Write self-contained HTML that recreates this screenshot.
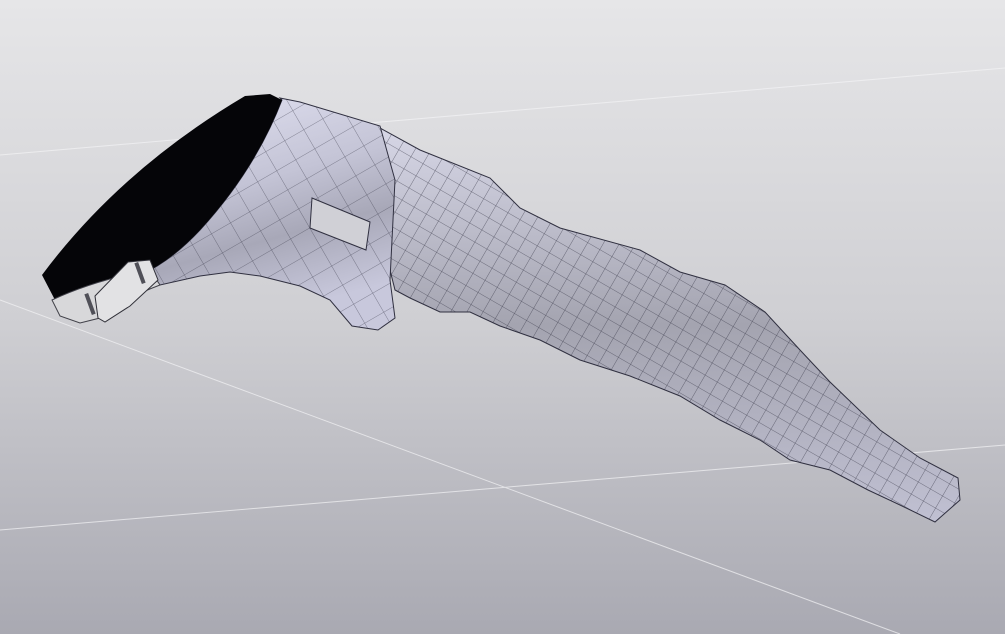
<!DOCTYPE html>
<html><head><meta charset="utf-8"><style>html,body{margin:0;padding:0;width:1005px;height:634px;overflow:hidden}</style></head>
<body>
<svg width="1005" height="634" viewBox="0 0 1005 634" xmlns="http://www.w3.org/2000/svg">
<defs>
<linearGradient id="bg" x1="0" y1="0" x2="0" y2="1">
<stop offset="0" stop-color="#e6e6e8"/><stop offset="0.5" stop-color="#cfcfd3"/><stop offset="1" stop-color="#a9a9b2"/>
</linearGradient>
<linearGradient id="arm" x1="0" y1="0" x2="0.3" y2="1">
<stop offset="0" stop-color="#e2e2f2"/><stop offset="0.45" stop-color="#c4c4d6"/><stop offset="0.7" stop-color="#a8a8b8"/><stop offset="1" stop-color="#c8c8dc"/>
</linearGradient>
<linearGradient id="fore" x1="0" y1="0" x2="0" y2="1">
<stop offset="0" stop-color="#d6d6e6"/><stop offset="0.5" stop-color="#a4a4b0"/><stop offset="1" stop-color="#c0c0d2"/>
</linearGradient>
<pattern id="mesh" width="14" height="14" patternUnits="userSpaceOnUse" patternTransform="rotate(30)">
<path d="M0 0H14M0 0V14" stroke="#2a2a3a" stroke-width="0.8" fill="none"/>
</pattern>
<pattern id="mesh2" width="22" height="22" patternUnits="userSpaceOnUse" patternTransform="rotate(-30)">
<path d="M0 0H22M0 0V22" stroke="#2a2a3a" stroke-width="0.8" fill="none"/>
</pattern>
<clipPath id="fc"><path d="M380 128 L420 150 L490 178 L520 208 L560 228 L640 250 L680 272 L725 285 L765 312 L800 350 L830 382 L880 430 L920 458 L958 478 L960 500 L935 522 L900 505 L868 490 L830 470 L790 460 L760 440 L720 420 L680 396 L630 376 L580 360 L540 340 L500 326 L470 312 L440 312 L410 298 L395 290 L390 270 Z"/></clipPath>
<clipPath id="cc"><path d="M280 98 L300 102 L380 126 L395 180 L390 280 L395 318 L378 330 L352 326 L330 300 L300 286 L260 276 L230 272 L200 276 L160 285 L140 275 Q170 262 200 230 Q255 170 282 100 Z"/></clipPath>
</defs>
<rect width="1005" height="634" fill="url(#bg)"/>
<g stroke="#f4f4f6" stroke-width="1" opacity="0.7">
<line x1="0" y1="155" x2="1005" y2="68"/>
<line x1="0" y1="530" x2="1005" y2="445"/>
<line x1="0" y1="300" x2="900" y2="634"/>
</g>
<path d="M380 128 L420 150 L490 178 L520 208 L560 228 L640 250 L680 272 L725 285 L765 312 L800 350 L830 382 L880 430 L920 458 L958 478 L960 500 L935 522 L900 505 L868 490 L830 470 L790 460 L760 440 L720 420 L680 396 L630 376 L580 360 L540 340 L500 326 L470 312 L440 312 L410 298 L395 290 L390 270 Z" fill="url(#fore)" stroke="#303040"/>
<rect width="1005" height="634" fill="url(#mesh)" clip-path="url(#fc)" opacity="0.7"/>
<path d="M280 98 L300 102 L380 126 L395 180 L390 280 L395 318 L378 330 L352 326 L330 300 L300 286 L260 276 L230 272 L200 276 L160 285 L140 275 Q170 262 200 230 Q255 170 282 100 Z" fill="url(#arm)" stroke="#303040"/>
<rect width="1005" height="634" fill="url(#mesh2)" clip-path="url(#cc)" opacity="0.6"/>
<path d="M42 275 Q120 170 245 96 L270 94 L282 100 Q255 170 200 230 Q170 262 140 275 Q95 285 55 300 Z" fill="#050508"/>
<path d="M52 300 Q95 280 150 270 L160 285 Q120 300 100 318 L80 323 L60 316 Z" fill="#d8d8da" stroke="#404048"/>
<path d="M95 296 L128 262 L150 260 L158 280 L130 306 L105 322 L98 318 Z" fill="#e2e2e4" stroke="#303038"/>
<rect x="138" y="262" width="4" height="22" fill="#505058" transform="rotate(-20 140 273)"/>
<rect x="88" y="293" width="4" height="22" fill="#505058" transform="rotate(-20 90 304)"/>
<path d="M312 198 L370 222 L366 250 L310 228 Z" fill="#d0d0d6" stroke="#303040"/>
</svg>
</body></html>
